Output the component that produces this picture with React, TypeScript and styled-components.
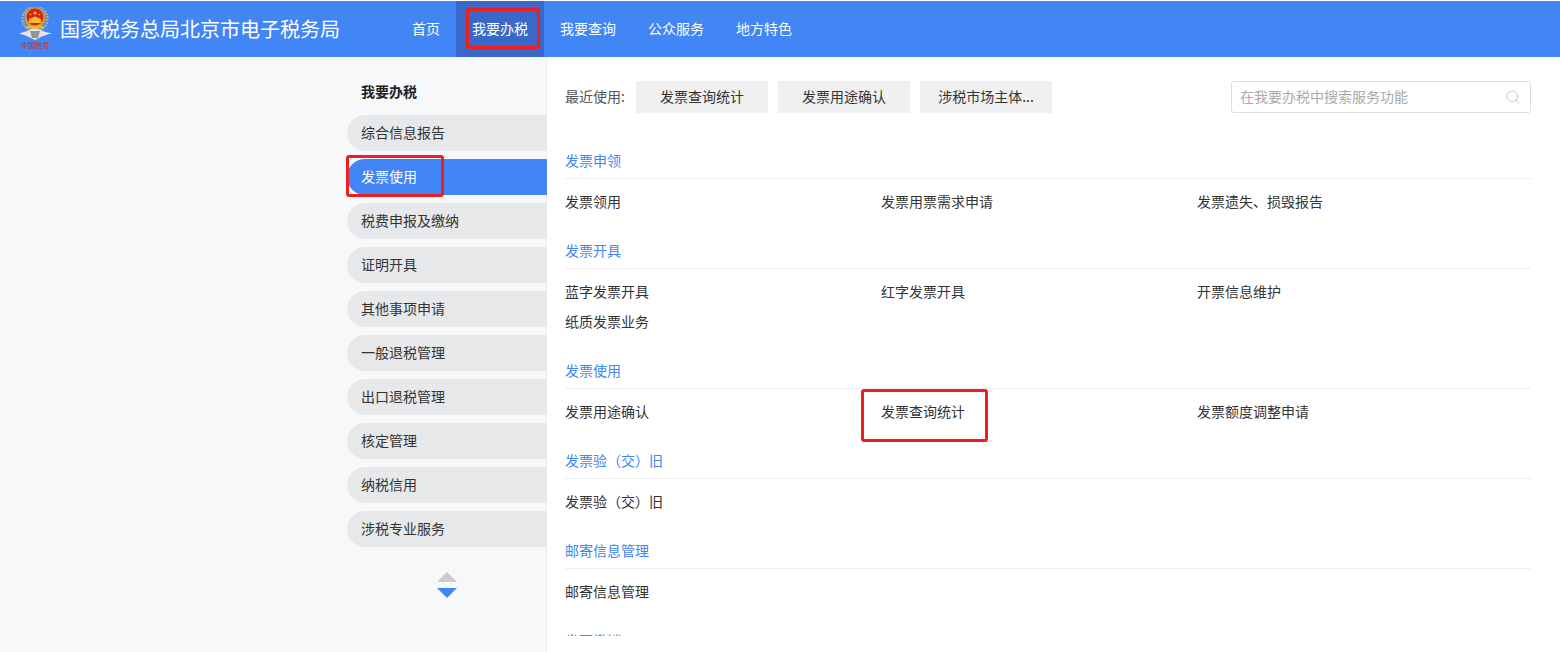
import React from 'react'
import styled, { createGlobalStyle } from 'styled-components'
import { Search } from 'lucide-react'

const GlobalStyle = createGlobalStyle`
  html, body {
    margin: 0;
    padding: 0;
    height: 100%;
    overflow: hidden;
    background: #fff;
    font-family: "Noto Sans CJK SC", "Liberation Sans", sans-serif;
    font-size: 14px;
    color: #333;
  }
  * { box-sizing: border-box; }
`

const Page = styled.div`
  display: flex;
  flex-direction: column;
  height: 652px;
  padding-top: 1px;
`

const Header = styled.header`
  display: flex;
  align-items: stretch;
  flex: 0 0 56px;
  background: #4285f4;
  color: #fff;
`

const Brand = styled.div`
  display: flex;
  align-items: center;
  width: 396px;
  padding-left: 18px;
`

const BrandTitle = styled.h1`
  margin: 0 0 0 6px;
  font-size: 20px;
  font-weight: 400;
  line-height: 56px;
  white-space: nowrap;
`

const Nav = styled.nav`
  display: flex;
`

const NavItem = styled.a<{ $active?: boolean }>`
  position: relative;
  display: flex;
  align-items: center;
  padding: 0 16px 2px;
  font-size: 14px;
  background: ${({ $active }) => ($active ? '#3a68c9' : 'transparent')};
`

const Mark = styled.span`
  position: absolute;
  border: 3px solid #f01f1f;
  border-radius: 3px;
  pointer-events: none;
`

const NavMark = styled(Mark)`
  left: 10px;
  top: 7px;
  width: 74px;
  height: 41px;
`

const SideMark = styled(Mark)`
  left: -1px;
  top: -4px;
  width: 98px;
  height: 42px;
`

const LinkMark = styled(Mark)`
  left: -20px;
  top: -8px;
  width: 127px;
  height: 53px;
`

const Body = styled.div`
  display: flex;
  flex: 1;
  min-height: 0;
`

const Sidebar = styled.aside`
  flex: 0 0 547px;
  padding: 24px 0 0 347px;
  background: #f6f8fa;
  box-shadow: inset -1px 0 0 #eeeff1;
`

const SideTitle = styled.div`
  height: 22px;
  margin-bottom: 12px;
  padding-left: 14px;
  font-weight: 700;
  line-height: 20px;
  color: #222;
`

const SideList = styled.ul`
  display: flex;
  flex-direction: column;
  gap: 8px;
  width: 200px;
  margin: 0;
  padding: 0;
  list-style: none;
`

const SideItem = styled.li<{ $active?: boolean }>`
  position: relative;
  height: 36px;
  padding-left: 14px;
  line-height: 34px;
  border-radius: 18px 0 0 18px;
  background: ${({ $active }) => ($active ? '#4285f4' : '#e7e8ea')};
  color: ${({ $active }) => ($active ? '#fff' : '#333')};
`

const Arrows = styled.div`
  display: flex;
  flex-direction: column;
  align-items: center;
  gap: 6px;
  width: 200px;
  margin-top: 25px;
`

const ArrowUp = styled.span`
  border-left: 10px solid transparent;
  border-right: 10px solid transparent;
  border-bottom: 10px solid #cccccc;
`

const ArrowDown = styled.span`
  border-left: 10px solid transparent;
  border-right: 10px solid transparent;
  border-top: 10px solid #4285f4;
`

const Main = styled.main`
  flex: 1;
  min-width: 0;
  padding: 24px 29px 16px 18px;
  display: flex;
  flex-direction: column;
`

const Toolbar = styled.div`
  display: flex;
  align-items: center;
  flex: 0 0 32px;
  margin-bottom: 30px;
`

const RecentLabel = styled.span`
  width: 71px;
  margin-bottom: 2px;
  color: #555;
`

const RecentList = styled.div`
  display: flex;
  gap: 10px;
`

const RecentButton = styled.button`
  width: 132px;
  height: 32px;
  padding: 0 0 2px;
  border: 0;
  background: #f0f0f0;
  font: inherit;
  color: #333;
`

const SearchBox = styled.div`
  display: flex;
  align-items: center;
  width: 300px;
  height: 32px;
  margin-left: auto;
  padding: 0 9px 0 8px;
  background: #fff;
  border: 1px solid #dcdcdc;
  border-radius: 3px;
  color: #bbb;
`

const SearchInput = styled.input`
  flex: 1;
  min-width: 0;
  padding: 0 0 2px;
  border: 0;
  outline: 0;
  font: inherit;
  &::placeholder {
    color: #aaa;
    opacity: 1;
  }
`

const Sections = styled.div`
  flex: 1;
  min-height: 0;
  overflow: hidden;
`

const Section = styled.section`
  padding-bottom: 16px;
`

const SectionTitle = styled.h3`
  height: 36px;
  margin: 0 0 8px;
  font-size: 14px;
  font-weight: 400;
  line-height: 34px;
  color: #4285f4;
  border-bottom: 1px solid #eeeeee;
`

const LinkGrid = styled.div`
  display: grid;
  grid-template-columns: repeat(3, 316px);
  grid-auto-rows: 30px;
`

const LinkItem = styled.a`
  justify-self: start;
  position: relative;
  line-height: 28px;
  color: #333;
`

const Emblem = () => (
  <svg width="36" height="44" viewBox="0 0 36 44" aria-hidden="true">
    {/* wheat ring */}
    <circle cx="17" cy="12" r="12.5" fill="none" stroke="#a7adac" strokeWidth="2.4" strokeDasharray="2 1" />
    {/* wings */}
    <path d="M1 26.5 Q9 25 17 20 Q25 25 34 26.5 Q26 28 21 31 L17 33 L13 31 Q8 28 1 26.5Z" fill="#e3e6e4" />
    <path d="M12 24 H22 L20 31 H14Z" fill="#8d9696" />
    {/* badge */}
    <circle cx="17" cy="11" r="10.5" fill="#d9a02e" />
    <circle cx="17" cy="10" r="8.5" fill="#dd1f1c" />
    <circle cx="17" cy="6" r="1.6" fill="#f6cc3c" />
    <circle cx="12.5" cy="7.5" r="0.8" fill="#f6cc3c" />
    <circle cx="21.5" cy="7.5" r="0.8" fill="#f6cc3c" />
    <path d="M11 12 L17 9.5 L23 12 V16 H11Z" fill="#f2bd2d" />
    <rect x="8" y="19" width="18" height="2.5" rx="1" fill="#e9b62e" />
    <text x="17.5" y="40.5" textAnchor="middle" fontSize="7" fill="#d8261c" fontFamily="'Noto Sans CJK SC', sans-serif">
      中国税务
    </text>
  </svg>
)

const navItems = ['首页', '我要办税', '我要查询', '公众服务', '地方特色']
const sideItems = ['综合信息报告', '发票使用', '税费申报及缴纳', '证明开具', '其他事项申请', '一般退税管理', '出口退税管理', '核定管理', '纳税信用', '涉税专业服务']
const recents = ['发票查询统计', '发票用途确认', '涉税市场主体...']

const sections = [
  { title: '发票申领', links: ['发票领用', '发票用票需求申请', '发票遗失、损毁报告'] },
  { title: '发票开具', links: ['蓝字发票开具', '红字发票开具', '开票信息维护', '纸质发票业务'] },
  { title: '发票使用', links: ['发票用途确认', '发票查询统计', '发票额度调整申请'] },
  { title: '发票验（交）旧', links: ['发票验（交）旧'] },
  { title: '邮寄信息管理', links: ['邮寄信息管理'] },
  { title: '发票缴销', links: [] as string[] },
]

export default function App() {
  return (
    <>
      <GlobalStyle />
      <Page>
        <Header>
          <Brand>
            <Emblem />
            <BrandTitle>国家税务总局北京市电子税务局</BrandTitle>
          </Brand>
          <Nav>
            {navItems.map((item) => (
              <NavItem key={item} $active={item === '我要办税'}>
                {item}
                {item === '我要办税' && <NavMark />}
              </NavItem>
            ))}
          </Nav>
        </Header>
        <Body>
          <Sidebar>
            <SideTitle>我要办税</SideTitle>
            <SideList>
              {sideItems.map((item) => (
                <SideItem key={item} $active={item === '发票使用'}>
                  {item}
                  {item === '发票使用' && <SideMark />}
                </SideItem>
              ))}
            </SideList>
            <Arrows>
              <ArrowUp />
              <ArrowDown />
            </Arrows>
          </Sidebar>
          <Main>
            <Toolbar>
              <RecentLabel>最近使用:</RecentLabel>
              <RecentList>
                {recents.map((item) => (
                  <RecentButton key={item}>{item}</RecentButton>
                ))}
              </RecentList>
              <SearchBox>
                <SearchInput placeholder="在我要办税中搜索服务功能" />
                <Search size={16} strokeWidth={1.2} />
              </SearchBox>
            </Toolbar>
            <Sections>
              {sections.map((section) => (
                <Section key={section.title}>
                  <SectionTitle>{section.title}</SectionTitle>
                  <LinkGrid>
                    {section.links.map((link) => (
                      <LinkItem key={link}>
                        {link}
                        {link === '发票查询统计' && <LinkMark />}
                      </LinkItem>
                    ))}
                  </LinkGrid>
                </Section>
              ))}
            </Sections>
          </Main>
        </Body>
      </Page>
    </>
  )
}
